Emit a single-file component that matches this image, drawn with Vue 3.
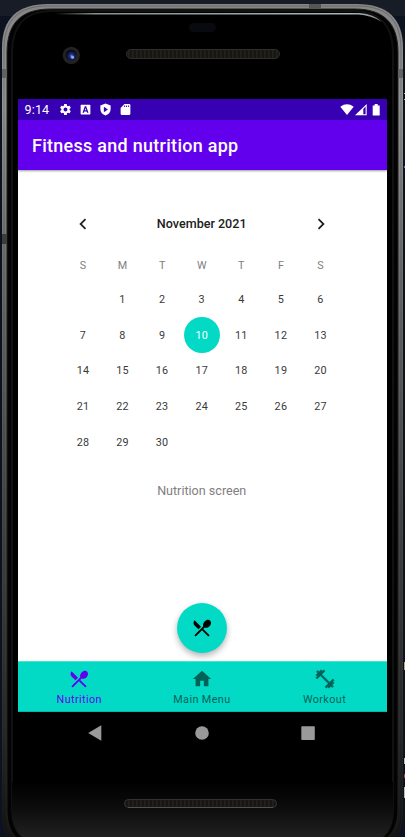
<script setup>
const weekdays = ['S', 'M', 'T', 'W', 'T', 'F', 'S']
const days = ['', ...Array.from({ length: 30 }, (_, i) => i + 1)]
const selected = 10

const cutlery =
  'M8.1 13.34l2.83-2.83L3.91 3.5c-1.56 1.56-1.56 4.09 0 5.66l4.19 4.18zm6.78-1.81c1.53.71 3.68.21 5.27-1.38 1.91-1.91 2.28-4.65.81-6.12-1.46-1.46-4.2-1.1-6.12.81-1.59 1.59-2.09 3.74-1.38 5.27L3.7 19.87l1.41 1.41L12 14.41l6.88 6.88 1.41-1.41L13.41 13l1.47-1.47z'
const tabs = [
  { label: 'Nutrition', icon: cutlery, active: true },
  { label: 'Main Menu', icon: 'M10 20v-6h4v6h5v-8h3L12 3 2 12h3v8z' },
  {
    label: 'Workout',
    bold: true,
    icon: 'M20.57 14.86L22 13.43 20.57 12 17 15.57 8.43 7 12 3.43 10.57 2 9.14 3.43 7.71 2 5.57 4.14 4.14 2.71 2.71 4.14l1.43 1.43L2 7.71l1.43 1.43L2 10.57 3.43 12 7 8.43 15.57 17 12 20.57 13.43 22l1.43-1.43L16.29 22l2.14-2.14 1.43 1.43 1.43-1.43-1.43-1.43L22 16.29z',
  },
]
</script>

<template>
  <div class="stage">
    <!-- Device shell: metal rim, bezel, camera and speakers -->
    <svg class="shell" width="405" height="837" viewBox="0 0 405 837" aria-hidden="true">
      <defs>
        <linearGradient id="metal" x1="0" y1="0" x2="0" y2="1">
          <stop offset="0" stop-color="#858585" />
          <stop offset="0.12" stop-color="#949494" />
          <stop offset="0.3" stop-color="#727272" />
          <stop offset="0.6" stop-color="#494949" />
          <stop offset="0.85" stop-color="#2b2b2b" />
          <stop offset="1" stop-color="#101010" />
        </linearGradient>
        <linearGradient id="glow" x1="0" y1="0" x2="0" y2="1">
          <stop offset="0" stop-color="#000" />
          <stop offset="0.4" stop-color="#0c0c0c" />
          <stop offset="1" stop-color="#262626" />
        </linearGradient>
        <linearGradient id="shine" x1="0" y1="0" x2="1" y2="0">
          <stop offset="0" stop-color="#87918f" stop-opacity="0" />
          <stop offset="0.12" stop-color="#87918f" />
          <stop offset="0.9" stop-color="#a9b8b7" />
          <stop offset="1" stop-color="#7f8888" />
        </linearGradient>
        <radialGradient id="lens" cx="0.55" cy="0.6" r="0.6">
          <stop offset="0" stop-color="#6f8cf0" />
          <stop offset="0.3" stop-color="#1d2f7c" />
          <stop offset="0.8" stop-color="#080b19" />
        </radialGradient>
        <pattern id="mesh" width="4" height="8" patternUnits="userSpaceOnUse">
          <rect width="4" height="8" fill="#171613" />
          <rect width="1.5" height="8" fill="#22211d" />
        </pattern>
        <clipPath id="body">
          <path d="M2 48C2 18 18 4 48 4H357C387 4 403 18 403 48V813C403 843 382 854 357 854H48C18 854 2 843 2 813Z" />
        </clipPath>
      </defs>
      <rect width="405" height="837" fill="#0d1220" />
      <rect width="405" height="16" fill="#171c26" />
      <g fill="#b7bcc2">
        <rect x="404" y="93" width="1" height="1" />
        <rect x="404" y="99" width="1" height="1" />
        <rect x="404" y="662" width="1" height="8" fill="#c1a66d" />
        <rect x="404" y="758" width="1" height="6" />
        <rect x="404" y="774" width="1" height="4" fill="#bc4038" />
        <rect x="404" y="787" width="1" height="11" />
      </g>
      <rect x="404" y="166" width="1" height="2" fill="#3685d4" />
      <g clip-path="url(#body)">
        <rect width="405" height="860" fill="url(#metal)" />
        <path d="M4 50C4 19 19 6 48 6H357C386 6 401 19 401 50V813C401 842 382 850 357 850H48C19 850 4 842 4 813Z" fill="none" stroke="#000" stroke-opacity=".22" stroke-width="1" />
        <path d="M7 53C7 22 22 9 51 9H354C383 9 398 22 398 53V810C398 838 379 848 354 848H51C22 848 7 838 7 810Z" fill="#030303" stroke="#202020" stroke-width="1" />
        <path d="M12 53C12 24 27 11 51 11H354C378 11 393 24 393 53V810C393 834 379 846 354 846H51C26 846 12 834 12 810Z" fill="#000" stroke="#111" stroke-width="2" />
        <rect x="2" y="69" width="5" height="9" fill="#626262" />
        <rect x="398" y="69" width="5" height="9" fill="#626262" />
        <rect x="2" y="234" width="5" height="10" fill="#3c3c3c" />
        <rect x="309" y="4" width="12" height="5" fill="#555" />
        <path d="M12 782H393V810C393 834 379 846 354 846H51C26 846 12 834 12 810Z" fill="url(#glow)" />
      </g>
      <path d="M55 13.1H359Q373 13.5 382 22Q371 15.2 358 14.5H55Z" fill="url(#shine)" />
      <rect x="189" y="23" width="27" height="9" rx="4.5" fill="#090a0f" />
      <circle cx="71.3" cy="55.3" r="8.6" fill="#242222" />
      <circle cx="71" cy="55" r="5.5" fill="url(#lens)" />
      <circle cx="72.6" cy="57.3" r="1.5" fill="#8fa9fb" />
      <rect x="126.5" y="49.5" width="153" height="9" rx="4.5" fill="url(#mesh)" stroke="#302e2c" />
      <rect x="124.5" y="799.5" width="152" height="8" rx="4" fill="url(#mesh)" stroke="#343231" />
      <path d="M128 807.5H273" stroke="#55504e" />
    </svg>

    <main class="screen">
      <div class="status">
        <span class="clock">9:14</span>
        <svg class="s-icon" viewBox="0 0 24 24"><path d="M19.4 13c.1-.3.1-.7.1-1s0-.7-.1-1l2.1-1.6c.2-.2.3-.4.1-.7l-2-3.4c-.1-.2-.4-.3-.6-.2l-2.5 1c-.5-.4-1.1-.7-1.7-1l-.4-2.6c0-.3-.2-.5-.5-.5h-4c-.3 0-.5.2-.5.5l-.4 2.6c-.6.3-1.2.6-1.7 1l-2.5-1c-.2-.1-.5 0-.6.2l-2 3.4c-.1.2-.1.5.1.7L4.5 11c0 .3-.1.7-.1 1s0 .7.1 1l-2.200 1.600c-.2.2-.2.500-.1.700l2 3.400c.1.2.4.3.6.2l2.500-1c.5.4 1.100.7 1.700 1l.4 2.600c0 .3.2.5.5.5h4c.3 0 .5-.2.5-.5l.4-2.600c.6-.3 1.200-.6 1.700-1l2.500 1c.2.1.5 0 .6-.2l2-3.400c.1-.2.1-.5-.1-.7zM12 15.600a3.600 3.600 0 1 1 0-7.200 3.600 3.600 0 0 1 0 7.200z" /></svg>
        <svg class="s-icon" viewBox="0 0 24 24"><path fill-rule="evenodd" d="M4 3h16q1 0 1 1v16q0 1-1 1H4q-1 0-1-1V4q0-1 1-1zM10.7 6L6.5 18h2.6l.8-2.500h4.200l.8 2.500h2.600L13.300 6zM10.600 13.400L12 9l1.400 4.400z" /></svg>
        <svg class="s-icon" viewBox="0 0 24 24"><path fill-rule="evenodd" d="M12 1L2.500 4.500V11c0 6 4 10.500 9.500 12 5.500-1.500 9.500-6 9.500-12V4.500zM9 7l7.500 5L9 17z" /></svg>
        <svg class="s-icon" viewBox="0 0 24 24"><path fill-rule="evenodd" d="M10 2h9q2 0 2 2v16q0 2-2 2H5q-2 0-2-2V9zM9.500 4.500v3h1.700v-3zM13 4.500v3h1.700v-3zM16.500 4.500v3h1.700v-3z" /></svg>
        <span class="spacer"></span>
        <svg class="signals" width="40" height="14" viewBox="0 0 40 14">
          <path d="M.3 3.700Q7 -1 13.700 3.700L7 12z" />
          <path fill-rule="evenodd" d="M15 12.300L26.700 1V12.300zM23.300 6V11.300H25.600V3.500z" />
          <path d="M32.700 2.500h2V1h3v1.500h2v10h-7z" />
        </svg>
      </div>

      <header class="appbar"><h1>Fitness and nutrition app</h1></header>

      <section class="content">
        <div class="month">
          <svg width="22" height="22" viewBox="0 0 24 24"><path d="M15.410 7.410L14 6l-6 6 6 6 1.410-1.410L10.830 12z" /></svg>
          <span>November 2021</span>
          <svg width="22" height="22" viewBox="0 0 24 24"><path d="M8.590 7.410L10 6l6 6-6 6-1.410-1.410L13.170 12z" /></svg>
        </div>
        <div class="grid weekdays">
          <span v-for="(d, i) in weekdays" :key="i">{{ d }}</span>
        </div>
        <div class="grid dates">
          <span v-for="(d, i) in days" :key="i" :class="{ selected: d === selected }">{{ d }}</span>
        </div>
        <p class="caption">Nutrition screen</p>
        <button class="fab" aria-label="Nutrition">
          <svg width="22" height="22" viewBox="0 0 24 24"><path :d="cutlery" /></svg>
        </button>
      </section>

      <nav class="tabs">
        <div v-for="t in tabs" :key="t.label" class="tab" :class="{ active: t.active, bold: t.bold }">
          <svg width="22" height="22" viewBox="0 0 24 24"><path :d="t.icon" /></svg>
          <span>{{ t.label }}</span>
        </div>
      </nav>

      <div class="system">
        <svg width="14" height="16" viewBox="0 0 14 16"><path d="M13.300 .3V15.700L.2 8z" /></svg>
        <svg width="14" height="16" viewBox="0 0 14 16"><circle cx="7" cy="8" r="6.800" /></svg>
        <svg width="14" height="16" viewBox="0 0 14 16"><rect x=".3" y="1.200" width="13.500" height="13.700" rx=".7" /></svg>
      </div>
    </main>
  </div>
</template>

<style>
body {
  overflow: hidden;
  background: #0d1220;
}
</style>

<style scoped>
.stage {
  position: relative;
  box-sizing: border-box;
  width: 405px;
  height: 837px;
  padding: 99px 18px 0;
  overflow: hidden;
  font-family: Roboto, "Liberation Sans", sans-serif;
}
.shell {
  position: absolute;
  inset: 0;
}
.screen {
  position: relative;
  width: 369px;
}
.status {
  display: flex;
  align-items: center;
  height: 21px;
  padding: 0 7px 0 6.5px;
  background: #3700b3;
  color: #fff;
}
.clock {
  width: 34.5px;
  font-size: 12.57px;
  letter-spacing: 0.15px;
}
.s-icon {
  width: 13px;
  height: 13px;
  margin-right: 7px;
  fill: #fff;
}
.spacer {
  flex: 1;
}
.signals {
  fill: #fff;
}
.appbar {
  position: relative;
  z-index: 1;
  display: flex;
  align-items: center;
  height: 50px;
  padding: 0 14px;
  background: #6200ee;
  box-shadow: 0 1px 2px rgba(0, 0, 0, 0.4);
  color: #fff;
}
h1 {
  margin: 0;
  padding-top: 2px;
  font-size: 17.96px;
  font-weight: 500;
  line-height: 24px;
  letter-spacing: 0.3px;
}
.content {
  display: flex;
  flex-direction: column;
  align-items: center;
  box-sizing: border-box;
  height: 491px;
  padding-right: 1.6px;
  background: #fff;
}
.month {
  display: flex;
  align-items: center;
  justify-content: space-between;
  box-sizing: border-box;
  width: 277px;
  height: 36px;
  margin-top: 35.5px;
  padding: 0 8.5px;
  color: #212121;
  font-size: 12.57px;
  font-weight: 500;
}
.month svg {
  fill: #212121;
}
.grid {
  display: grid;
  grid-template-columns: repeat(7, 39.6px);
}
.grid span {
  display: flex;
  align-items: center;
  justify-content: center;
  justify-self: center;
}
.weekdays {
  margin-top: 12.5px;
  color: #808080;
  font-size: 10.8px;
}
.weekdays span {
  height: 22px;
}
.dates {
  grid-auto-rows: 35.8px;
  margin-top: 5.5px;
  color: #3a3a3a;
  font-size: 10.8px;
  letter-spacing: 0.2px;
}
.dates span {
  width: 35.8px;
  height: 35.8px;
}
.dates .selected {
  border-radius: 50%;
  background: #03dac5;
  color: #fff;
}
.caption {
  margin: 21.5px 0 0;
  color: #808080;
  font-size: 12.57px;
  line-height: 18px;
}
.fab {
  display: flex;
  align-items: center;
  justify-content: center;
  width: 50px;
  height: 50px;
  margin: 103.3px 0 0;
  padding: 0;
  border: 0;
  border-radius: 50%;
  background: #03dac5;
  box-shadow: 0 3px 6px rgba(0, 0, 0, 0.3);
}
.tabs {
  position: relative;
  display: grid;
  grid-template-columns: repeat(3, 1fr);
  box-sizing: border-box;
  height: 51px;
  padding-right: 1.2px;
  background: #03dac5;
  box-shadow: inset 0 1px #45e5d6, inset 0 -1px #04b8a8;
}
.tab {
  display: flex;
  flex-direction: column;
  align-items: center;
  padding-top: 7px;
  color: #026158;
  font-size: 10.8px;
  line-height: 14px;
  letter-spacing: 0.4px;
}
.tab svg {
  fill: currentColor;
}
.tab.bold svg {
  stroke: currentColor;
  stroke-width: 0.6;
}
.tab span {
  margin-top: 3px;
}
.tab.active {
  color: #6200ee;
}
.system {
  display: flex;
  justify-content: center;
  gap: 92.5px;
  height: 43px;
  padding: 13px 1.8px 0 0;
  box-sizing: border-box;
  background: #000;
}
.system svg {
  fill: #999;
}
</style>
